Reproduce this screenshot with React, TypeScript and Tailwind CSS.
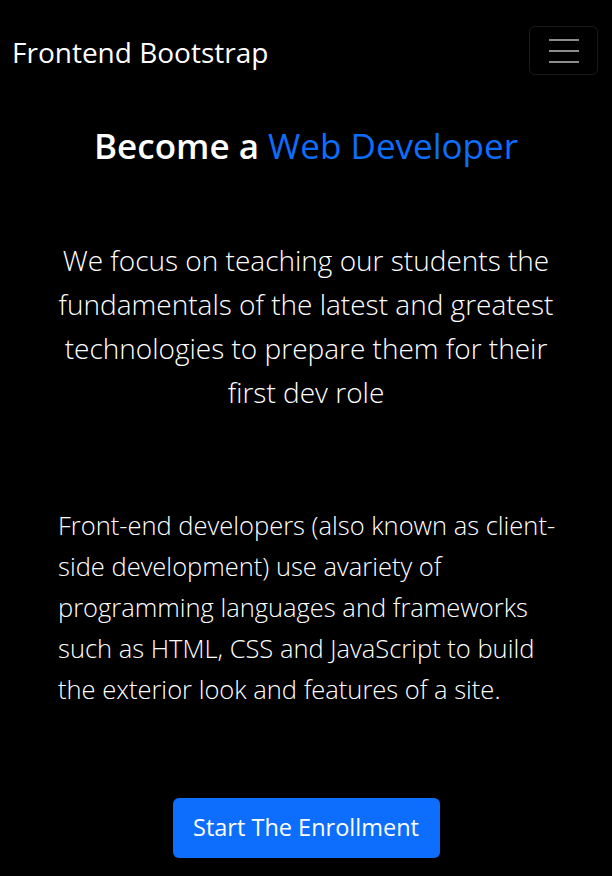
import React from 'react';

export default function App() {
  return (
    <div className="min-h-screen bg-black text-white font-['Open_Sans',sans-serif]">
      {/* Navbar */}
      <nav className="flex items-start justify-between pl-3 pr-[14px] pt-[26px]">
        <a href="#" className="mt-[6px] text-[28px] leading-[40px] text-white">
          Frontend Bootstrap
        </a>
        <button className="flex h-[49px] w-[69px] flex-col items-center justify-center gap-[9px] rounded-md border border-white/10">
          <span className="block h-[2px] w-[30px] bg-white/55" />
          <span className="block h-[2px] w-[30px] bg-white/55" />
          <span className="block h-[2px] w-[30px] bg-white/55" />
        </button>
      </nav>

      {/* Hero */}
      <section className="px-[58px] pt-[50px] text-center">
        <h1 className="text-[35px] leading-[42px]">
          <span className="font-semibold">Become a</span>{' '}
          <span className="text-[#0d6efd]">Web Developer</span>
        </h1>
        <p className="mt-[71px] text-[28px] leading-[44px] font-light">
          We focus on teaching our students the fundamentals of the latest and greatest technologies to prepare them for their first dev role
        </p>
      </section>

      <section className="pl-[58px] pr-[54px] pt-[91px]">
        <p className="text-[25.5px] leading-[41px] font-light">
          Front-end developers (also known as client-side development) use avariety of programming languages and frameworks such as HTML, CSS and JavaScript to build the exterior look and features of a site.
        </p>
      </section>

      <div className="flex justify-center pt-[88px] pb-[18px]">
        <button className="h-[60px] w-[267px] rounded-md bg-[#0d6efd] text-[23.5px] text-white">
          Start The Enrollment
        </button>
      </div>
    </div>
  );
}
